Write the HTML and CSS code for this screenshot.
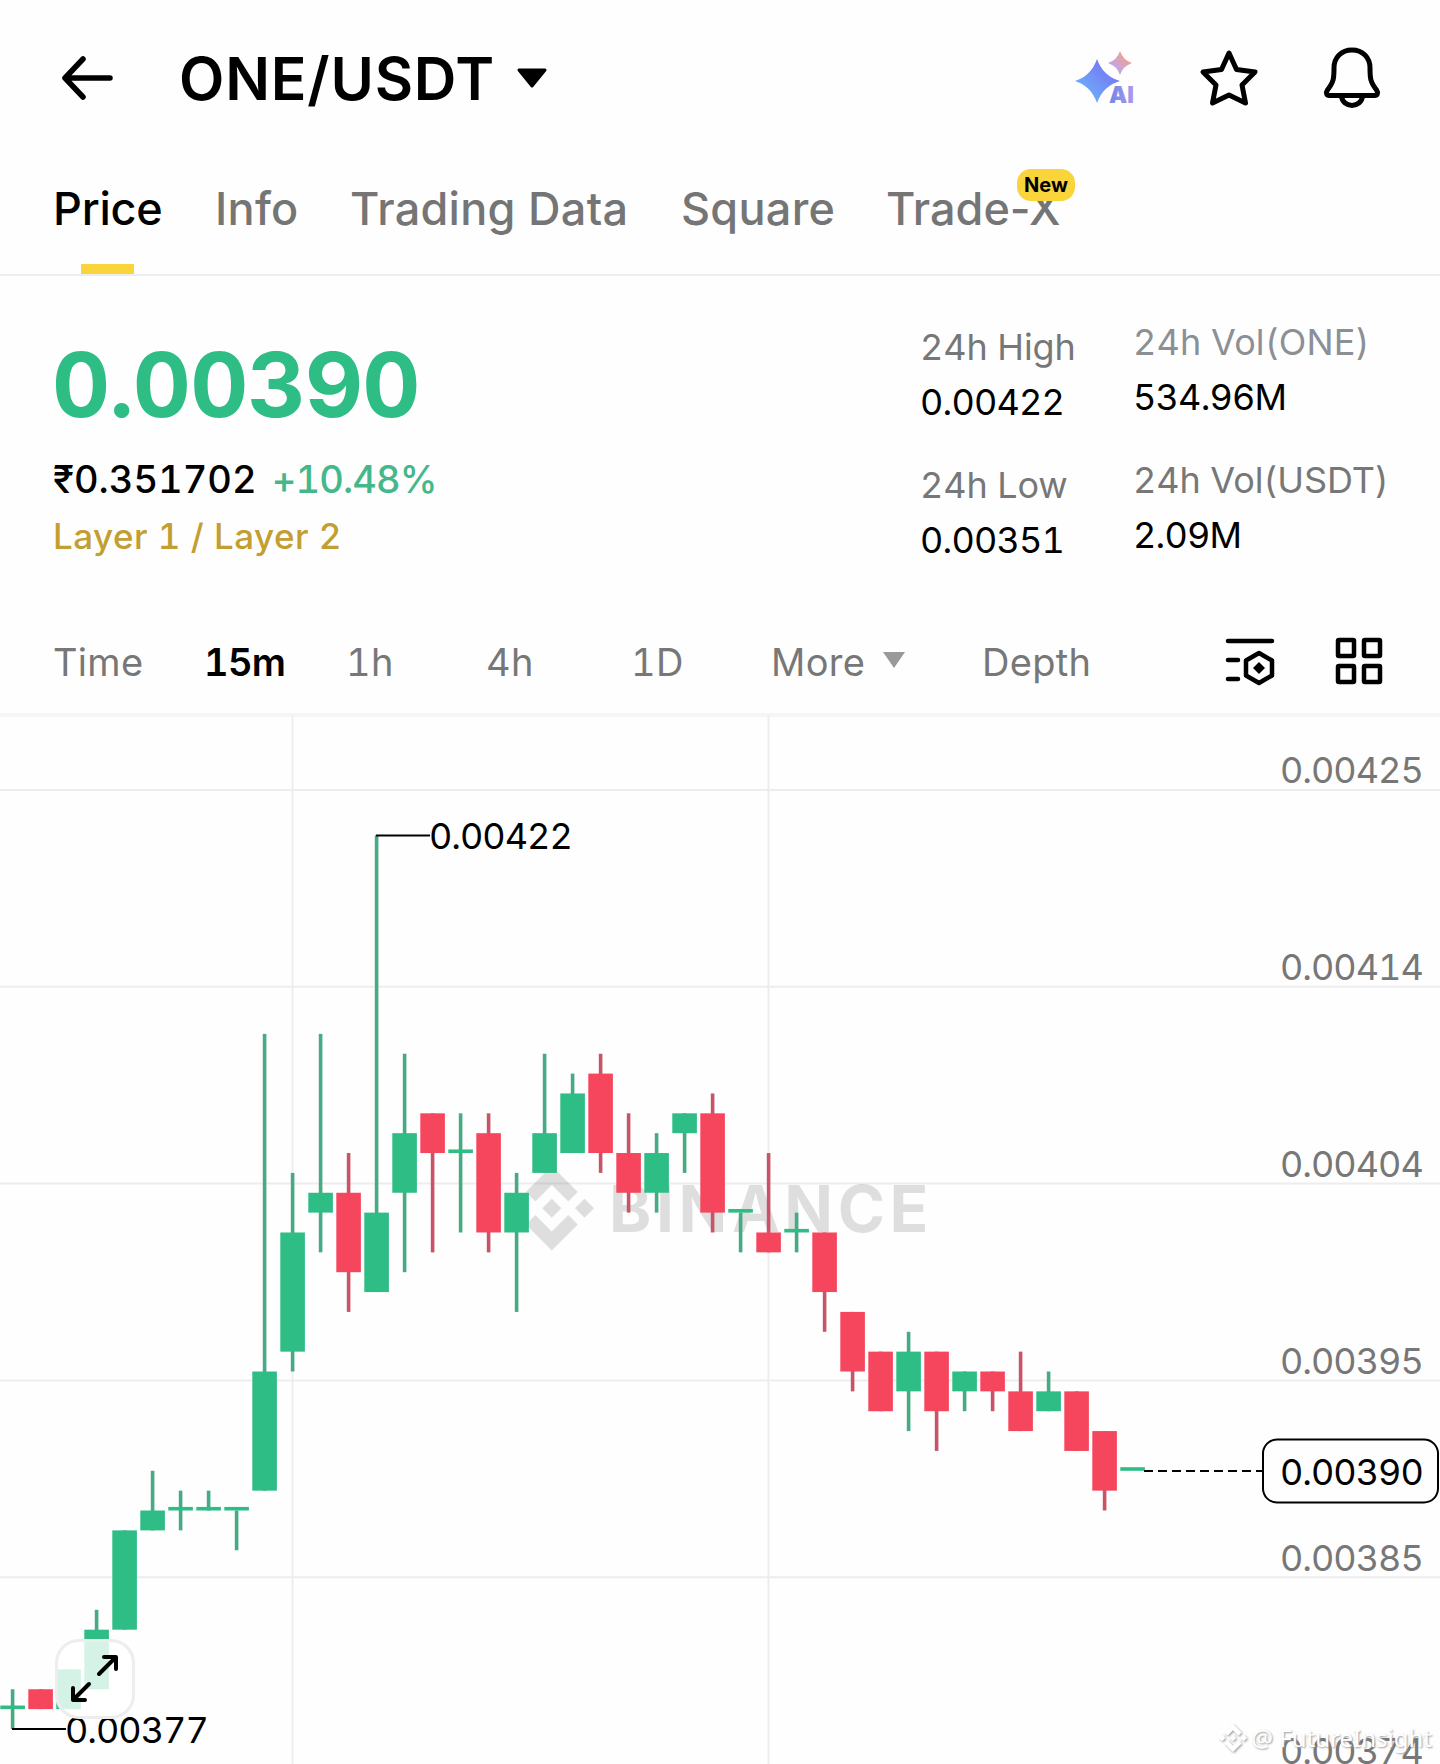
FILE: index.html
```html
<!DOCTYPE html>
<html lang="en">
<head>
    <meta charset="UTF-8">
    <meta name="viewport" content="width=device-width, initial-scale=1.0">
    <title>ONE/USDT</title>
    <link rel="stylesheet" href="styles.css">
</head>
<body>

    <header class="topbar">
        <svg class="back" width="52" height="44" viewBox="0 0 52 44"><path d="M22 3 4 22l18 19M4 22h45"/></svg>
        <h1>ONE/USDT</h1>
        <svg class="caret" width="32" height="22" viewBox="0 0 32 22"><path d="M3 2h26L16 18z"/></svg>
        <div class="actions">
            <svg width="64" height="60" viewBox="0 0 64 60">
                <defs>
                    <linearGradient id="blue" x1="0" y1="1" x2="1" y2="0">
                        <stop offset="0.1" stop-color="#6cb6fb"/>
                        <stop offset="0.7" stop-color="#7480f5"/>
                    </linearGradient>
                    <linearGradient id="pink" x1="0" y1="1" x2="1" y2="0">
                        <stop offset="0.2" stop-color="#b9a6f5"/>
                        <stop offset="0.8" stop-color="#f3a08f"/>
                    </linearGradient>
                    <linearGradient id="violet">
                        <stop offset="0" stop-color="#6f86e8"/>
                        <stop offset="1" stop-color="#a99bea"/>
                    </linearGradient>
                </defs>
                <path fill="url(#blue)" d="M23 11Q29 28 46 33Q29 38 23 55Q17 38 1 33Q17 28 23 11z"/>
                <path fill="url(#pink)" d="M46 3Q49 12 58 15Q49 18 46 27Q43 18 34 15Q43 12 46 3z"/>
                <text class="ai" x="35" y="54.500">AI</text>
            </svg>
            <svg class="line" width="64" height="64" viewBox="0 0 64 64"><path d="M32 7l7.500 16.500 18.500 2.500-13 13 3.500 18L32 49l-16.500 8 3.500-18L6 26l18.500-2.500z"/></svg>
            <svg class="line" width="64" height="64" viewBox="0 0 64 64"><path d="M32 4c-10.500 0-18 7.500-18 18 0 11-.5 14-6.500 22-2 3-1 5.500 2 5.500h45c3 0 4-2.500 2-5.500-6-8-6.500-11-6.500-22 0-10.500-7.500-18-18-18zM21.500 50c1 12.500 20 12.500 21 0"/></svg>
        </div>
    </header>

    <nav class="tabs">
        <a class="active">Price</a>
        <a>Info</a>
        <a>Trading Data</a>
        <a>Square</a>
        <a>Trade-X<span class="badge">New</span></a>
    </nav>

    <section class="summary">
        <div class="quote">
            <div class="price">0.00390</div>
            <div class="fiat">₹0.351702 <span>+10.48%</span></div>
            <div class="tag">Layer 1 / Layer 2</div>
        </div>
        <dl class="stats">
            <dt>24h High</dt>
            <dd>0.00422</dd>
            <dt>24h Low</dt>
            <dd>0.00351</dd>
        </dl>
        <dl class="stats vol">
            <dt class="pale">24h Vol(ONE)</dt>
            <dd>534.96M</dd>
            <dt>24h Vol(USDT)</dt>
            <dd>2.09M</dd>
        </dl>
    </section>

    <div class="intervals">
        <span>Time</span>
        <span class="active">15m</span>
        <span>1h</span>
        <span>4h</span>
        <span>1D</span>
        <span>More <svg width="26" height="18" viewBox="0 0 26 18"><path d="M2 1h22L13 17z"/></svg></span>
        <span>Depth</span>
        <svg class="tool" width="52" height="50" viewBox="0 0 52 50">
            <path d="M4 5h44M4 24h10M4 43h10"/>
            <path d="M35 17l13 7.500v15L35 47l-13-7.500v-15z"/>
            <path class="solid" d="M35 26l6 6-6 6-6-6z"/>
        </svg>
        <svg class="tool" width="50" height="50" viewBox="0 0 50 50">
            <rect x="4" y="4" width="16" height="16" rx="1"/>
            <rect x="30" y="4" width="16" height="16" rx="1"/>
            <rect x="4" y="30" width="16" height="16" rx="1"/>
            <rect x="30" y="30" width="16" height="16" rx="1"/>
        </svg>
    </div>

    <main class="chart">
        <svg id="chart" width="1440" height="1048" viewBox="0 716 1440 1048">
            <defs>
                <path id="logo" d="M38.700 53.200 63.300 28.600 88 53.200l14.300-14.300L63.300 0 24.400 38.900zM0 63.300 14.300 49l14.300 14.300-14.300 14.300zM38.700 73.400 63.300 98 88 73.400l14.300 14.300-39 38.900-38.900-38.900zM98 63.300 112.300 49l14.300 14.300-14.300 14.300zM49 63.300 63.300 49l14.300 14.300-14.300 14.300z"/>
            </defs>
            <g id="grid"></g>
            <g class="brand">
                <use href="#logo" transform="translate(509.500 1166) scale(.668)"/>
                <text x="609" y="1232">BINANCE</text>
            </g>
            <g id="candles"></g>
            <g class="marker">
                <path d="M376 835.500h54M12 1729h54"/>
                <text x="429" y="849">0.00422</text>
                <text x="65" y="1743">0.00377</text>
            </g>
            <g class="last">
                <path d="M1144 1471h119"/>
                <rect x="1263" y="1439.500" width="175" height="63" rx="14"/>
                <text x="1280" y="1485">0.00390</text>
            </g>
        </svg>
        <button class="expand">
            <svg width="52" height="52" viewBox="0 0 52 52"><path d="M30 21 46 5M35 4h12v12M20 31 5 46M4 35v12h12"/></svg>
        </button>
        <div class="credit">
            <svg width="28" height="28" viewBox="0 0 126.600 126.600"><use href="#logo"/></svg>
            <span>@ FutureInsight</span>
        </div>
    </main>

    <script>
        // prices in units of 0.00001: [color, high, top, bottom, low]
        const candles = [
            ['g', 379, 378, 378, 377], ['r', 379, 379, 378, 378], ['g', 380, 380, 378, 378],
            ['g', 383, 382, 379, 379], ['g', 387, 387, 382, 382], ['g', 390, 388, 387, 387],
            ['g', 389, 388, 388, 387], ['g', 389, 388, 388, 388], ['g', 388, 388, 388, 386],
            ['g', 412, 395, 389, 389], ['g', 405, 402, 396, 395], ['g', 412, 404, 403, 401],
            ['r', 406, 404, 400, 398], ['g', 422, 403, 399, 399], ['g', 411, 407, 404, 400],
            ['r', 408, 408, 406, 401], ['g', 408, 406, 406, 402], ['r', 408, 407, 402, 401],
            ['g', 405, 404, 402, 398], ['g', 411, 407, 405, 405], ['g', 410, 409, 406, 406],
            ['r', 411, 410, 406, 405], ['r', 408, 406, 404, 403], ['g', 407, 406, 404, 403],
            ['g', 408, 408, 407, 405], ['r', 409, 408, 403, 402], ['g', 403, 403, 403, 401],
            ['r', 406, 402, 401, 401], ['g', 403, 402, 402, 401], ['r', 402, 402, 399, 397],
            ['r', 398, 398, 395, 394], ['r', 396, 396, 393, 393], ['g', 397, 396, 394, 392],
            ['r', 396, 396, 393, 391], ['g', 395, 395, 394, 393], ['r', 395, 395, 394, 393],
            ['r', 396, 394, 392, 392], ['g', 395, 394, 393, 393], ['r', 394, 394, 391, 391],
            ['r', 392, 392, 389, 388], ['g', 390, 390, 390, 390]
        ];
        const y = p => 1470.8 + (390 - p) * 19.86;

        let shapes = '';
        candles.forEach(([color, high, top, bottom, low], i) => {
            const x = 12.6 + i * 28;
            // flat candles are drawn as a thin bar resting on the price
            const bodyTop = top === bottom ? y(top) - 3.6 : y(top);
            if (high !== low) {
                shapes += `<rect class="wick ${color}" x="${x - 1.8}" y="${y(high)}" width="3.6" height="${y(low) - y(high)}"/>`;
            }
            shapes += `<rect class="${color}" x="${x - 12.3}" y="${bodyTop}" width="24.6" height="${y(bottom) - bodyTop}"/>`;
        });
        document.getElementById('candles').innerHTML = shapes;

        let grid = '<path d="M292.500 716v1048M768.500 716v1048"/>';
        ['0.00425', '0.00414', '0.00404', '0.00395', '0.00385', '0.00374'].forEach((label, i) => {
            const line = 790 + i * 196.8;
            grid += `<path d="M0 ${line}h1440"/><text x="1280" y="${Math.min(line - 6.7, 1763.5)}">${label}</text>`;
        });
        document.getElementById('grid').innerHTML = grid;
    </script>

</body>
</html>
```

FILE: styles.css
```css
* {
    box-sizing: border-box;
}
body {
    margin: 0;
    width: 1440px;
    height: 1764px;
    overflow: hidden;
    background-color: #fefefe;
    color: #000;
    font-family: Inter, "Noto Sans", sans-serif;
    font-variant-numeric: tabular-nums;
}
svg {
    display: block;
    flex: none;
}
.topbar {
    display: flex;
    align-items: center;
    height: 156px;
    padding: 0 56px 0 61px;
}
.back {
    fill: none;
    stroke: #000;
    stroke-width: 5.5;
    stroke-linecap: round;
    stroke-linejoin: round;
}
h1 {
    margin: 2px 21px 0 66px;
    font-size: 59px;
    font-weight: 600;
    line-height: 70px;
    letter-spacing: 0.8px;
}
.caret {
    margin-top: 1px;
    stroke: #000;
    stroke-width: 3;
    stroke-linejoin: round;
}
.actions {
    display: flex;
    align-items: center;
    gap: 59px;
    margin-left: auto;
}
.ai {
    font-size: 23px;
    font-weight: 900;
    fill: url(#violet);
}
.line {
    fill: none;
    stroke: #000;
    stroke-width: 5;
    stroke-linejoin: round;
}
.tabs {
    display: grid;
    grid-template-columns: 162px 135px 331px 205px 1fr;
    height: 120px;
    padding: 26px 0 0 53px;
    border-bottom: 2px solid #ededed;
    font-size: 45px;
    font-weight: 500;
    font-variant-numeric: normal;
    line-height: 53px;
    letter-spacing: 0.3px;
    color: #757575;
}
.tabs a {
    position: relative;
    justify-self: start;
    white-space: nowrap;
}
.tabs a:last-child {
    letter-spacing: 0;
}
.tabs .active {
    color: #000;
    letter-spacing: -0.2px;
}
.tabs .active::after {
    content: "";
    position: absolute;
    left: 28px;
    bottom: 0;
    width: 53px;
    height: 10px;
    background-color: #fad43b;
}
.badge {
    position: absolute;
    left: 131px;
    top: -13px;
    width: 58px;
    height: 32px;
    border-radius: 14px;
    background-color: #fad43b;
    color: #000;
    font-size: 20px;
    font-weight: 700;
    line-height: 32px;
    text-align: center;
}
.summary {
    display: flex;
    height: 345px;
    padding-left: 53px;
}
.quote {
    width: 868px;
    padding-top: 54px;
}
.price {
    margin-left: -1px;
    color: #2ebd85;
    font-size: 90px;
    font-weight: 700;
    line-height: 110px;
    letter-spacing: -0.8px;
}
.fiat {
    margin-top: 16px;
    font-size: 38px;
    font-weight: 500;
    line-height: 46px;
}
.fiat span {
    margin-left: 5px;
    color: #45b88b;
    letter-spacing: -0.9px;
}
.tag {
    margin-top: 12px;
    color: #c39f31;
    font-size: 35px;
    font-weight: 500;
    line-height: 44px;
    letter-spacing: 0.45px;
}
.stats {
    width: 213px;
    margin: 0 0 0 -1px;
    padding-top: 44px;
    font-size: 36px;
    line-height: 55px;
    white-space: nowrap;
}
.vol {
    margin-left: 0;
    padding-top: 39px;
}
dt {
    color: #777;
    letter-spacing: -0.1px;
}
dd {
    margin: 0 0 28px;
    letter-spacing: -0.8px;
}
.pale {
    color: #8b9095;
    letter-spacing: 0.1px;
}
.intervals {
    display: grid;
    grid-template-columns: 151px 142px 140px 145px 140px 211px 241px 110px auto;
    height: 96px;
    padding: 17px 0 0 53px;
    border-bottom: 4px solid #f5f5f5;
    color: #777;
    font-size: 38px;
    line-height: 48px;
    letter-spacing: 0.3px;
}
.intervals span {
    display: flex;
    align-items: center;
    gap: 16px;
    height: 48px;
}
.intervals .active {
    color: #000;
    font-weight: 600;
    letter-spacing: -0.7px;
}
.intervals span svg {
    fill: #999;
    margin-top: -4px;
}
.tool {
    margin: -2px 0 0 1px;
    fill: none;
    stroke: #000;
    stroke-width: 4.5;
    stroke-linecap: round;
    stroke-linejoin: round;
}
.tool .solid {
    fill: #000;
    stroke: none;
}
.chart {
    position: relative;
    height: 1048px;
    margin-top: -1px;
}
.chart text {
    font-size: 36px;
    letter-spacing: -1px;
}
#grid path {
    stroke: #ededed;
    stroke-width: 2;
}
#grid text {
    fill: #777;
}
.g {
    fill: #2ebd85;
}
.r {
    fill: #f6465d;
}
.wick.g {
    fill: #46ab84;
}
.wick.r {
    fill: #c95468;
}
.brand {
    opacity: 0.12;
}
.chart .brand text {
    font-size: 64px;
    font-weight: 700;
    letter-spacing: 4.6px;
}
.marker path,
.last path {
    stroke: #000;
    stroke-width: 2;
}
.last path {
    stroke-dasharray: 9 5;
}
.last rect {
    fill: #fefefe;
    stroke: #000;
    stroke-width: 2;
}
.expand {
    position: absolute;
    left: 55px;
    top: 923px;
    width: 80px;
    height: 80px;
    padding: 0 0 0 11px;
    border: 3px solid #ededed;
    border-radius: 24px;
    background-color: rgba(255, 255, 255, 0.8);
}
.expand svg {
    fill: none;
    stroke: #000;
    stroke-width: 4;
    stroke-linecap: round;
    stroke-linejoin: round;
}
.credit {
    position: absolute;
    right: 8px;
    bottom: 9px;
    display: flex;
    align-items: center;
    gap: 5px;
    color: #fff;
    font: 24px/34px "Noto Sans", sans-serif;
    text-shadow: 1px 1px 2px #999;
}
.credit svg {
    fill: #fff;
    overflow: visible;
    filter: drop-shadow(1px 1px 1px #999);
}
```
